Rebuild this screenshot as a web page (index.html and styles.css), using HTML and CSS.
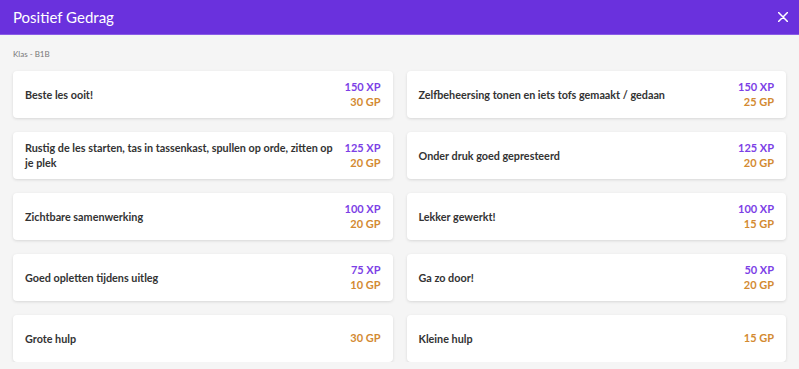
FILE: index.html
```html
<!DOCTYPE html>
<html lang="nl">
	<head>
		<meta charset="UTF-8">
		<title>Positief Gedrag</title>
		<link rel="stylesheet" href="styles.css">
	</head>
	<body>
		<header class="bar">
			<h1>Positief Gedrag</h1>
			<button class="close" aria-label="Sluiten">
				<svg width="10" height="10" viewBox="0 0 10 10"><path d="M0.5 0.5L9.5 9.5M9.5 0.5L0.5 9.5" stroke="#fff" stroke-width="1.5" stroke-linecap="round"/></svg>
			</button>
		</header>

		<main class="content">
			<p class="klas">Klas - B1B</p>
			<ul class="list">
				<li class="card">
					<span class="name">Beste les ooit!</span>
					<span class="pts"><b class="xp">150 XP</b><b class="gp">30 GP</b></span>
				</li>
				<li class="card">
					<span class="name">Zelfbeheersing tonen en iets tofs gemaakt / gedaan</span>
					<span class="pts"><b class="xp">150 XP</b><b class="gp">25 GP</b></span>
				</li>
				<li class="card">
					<span class="name">Rustig de les starten, tas in tassenkast, spullen op orde, zitten op je plek</span>
					<span class="pts"><b class="xp">125 XP</b><b class="gp">20 GP</b></span>
				</li>
				<li class="card">
					<span class="name">Onder druk goed gepresteerd</span>
					<span class="pts"><b class="xp">125 XP</b><b class="gp">20 GP</b></span>
				</li>
				<li class="card">
					<span class="name">Zichtbare samenwerking</span>
					<span class="pts"><b class="xp">100 XP</b><b class="gp">20 GP</b></span>
				</li>
				<li class="card">
					<span class="name">Lekker gewerkt!</span>
					<span class="pts"><b class="xp">100 XP</b><b class="gp">15 GP</b></span>
				</li>
				<li class="card">
					<span class="name">Goed opletten tijdens uitleg</span>
					<span class="pts"><b class="xp">75 XP</b><b class="gp">10 GP</b></span>
				</li>
				<li class="card">
					<span class="name">Ga zo door!</span>
					<span class="pts"><b class="xp">50 XP</b><b class="gp">20 GP</b></span>
				</li>
				<li class="card">
					<span class="name">Grote hulp</span>
					<span class="pts"><b class="gp">30 GP</b></span>
				</li>
				<li class="card">
					<span class="name">Kleine hulp</span>
					<span class="pts"><b class="gp">15 GP</b></span>
				</li>
			</ul>
		</main>
	</body>
</html>
```

FILE: styles.css
```css
* {
	margin: 0;
	padding: 0;
	list-style: none;
	box-sizing: border-box;
}

body {
	font-family: Lato, "Liberation Sans", sans-serif;
	background: #f5f5f5;
	color: #333;
}

.bar {
	height: 35px;
	background: #6a31dd;
	display: flex;
	align-items: center;
	justify-content: space-between;
	padding: 0 11px 0 13px;
	border-bottom: 1px solid #8a5ce6;
}

.bar h1 {
	font-size: 15px;
	font-weight: 400;
	color: #fff;
}

.close {
	background: none;
	border: 0;
	display: flex;
	cursor: pointer;
}

.content {
	padding: 14px 13px 0;
}

.klas {
	font-size: 8px;
	line-height: 10px;
	color: #777;
	margin-bottom: 12px;
}

.list {
	display: grid;
	grid-template-columns: 1fr 1fr;
	column-gap: 14px;
	row-gap: 14px;
}

.card {
	height: 47px;
	background: #fff;
	border-radius: 4px;
	box-shadow: 0 1px 3px rgba(0, 0, 0, 0.12);
	display: flex;
	align-items: center;
	justify-content: space-between;
	padding: 0 12px;
}

.name {
	font-size: 10.8px;
	font-weight: 700;
	line-height: 15px;
	color: #333;
	padding-right: 8px;
	margin-top: -1px;
}

.pts {
	display: flex;
	flex-direction: column;
	align-items: flex-end;
	font-size: 11px;
	line-height: 15px;
	white-space: nowrap;
	margin-top: -2px;
}

.xp {
	color: #7c3fe6;
}

.gp {
	color: #d38a32;
}
```
